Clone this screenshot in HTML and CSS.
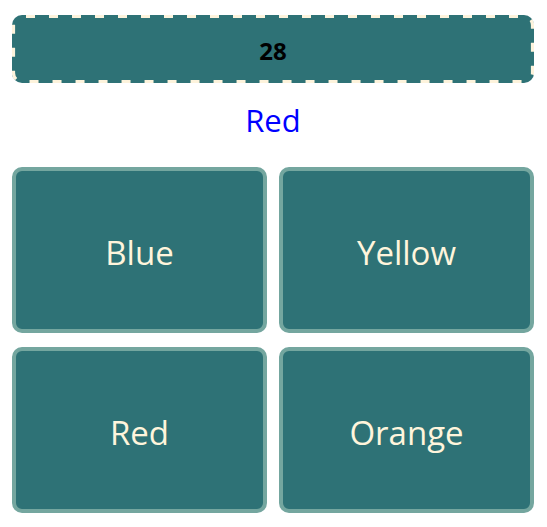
FILE: index.html
```html
<!DOCTYPE html>
<html>
<head>
<meta charset="utf-8">
<link rel="stylesheet" href="styles.css">
</head>
<body>
<div class="app">
  <div class="score">28</div>
  <div class="prompt">Red</div>
  <div class="choices">
    <button class="choice">Blue</button>
    <button class="choice">Yellow</button>
    <button class="choice">Red</button>
    <button class="choice">Orange</button>
  </div>
</div>
</body>
</html>
```
FILE: styles.css
```css
html, body {
  margin: 0;
  padding: 0;
  background: #ffffff;
}
.app {
  padding: 15px 13px 0 12px;
  font-family: "Open Sans", "Noto Sans", sans-serif;
}
.score {
  box-sizing: border-box;
  height: 68px;
  padding-top: 2px;
  background-color: #2e7276;
  background-image: url("data:image/svg+xml,%3Csvg xmlns='http://www.w3.org/2000/svg' width='522' height='68'%3E%3Crect x='1.5' y='1.5' width='519' height='65' rx='8.5' fill='none' stroke='%23fdf3dc' stroke-width='3.2' stroke-dasharray='9 14' stroke-dashoffset='-4'/%3E%3C/svg%3E");
  background-size: 100% 100%;
  border-radius: 10px;
  display: flex;
  align-items: center;
  justify-content: center;
  font-weight: 700;
  font-size: 24px;
  color: #000;
}
.prompt {
  margin-top: 16px;
  height: 43px;
  line-height: 43px;
  text-align: center;
  color: #0000ff;
  font-size: 31px;
}
.choices {
  margin-top: 25px;
  display: grid;
  grid-template-columns: 1fr 1fr;
  grid-auto-rows: 166px;
  column-gap: 12px;
  row-gap: 14px;
}
.choice {
  box-sizing: border-box;
  background: #2e7276;
  border: 4px solid #74a69f;
  border-radius: 10px;
  color: #fff5dc;
  font-family: "Open Sans", "Noto Sans", sans-serif;
  font-size: 33px;
  padding: 4px 0 0 0;
  margin: 0;
}
```
